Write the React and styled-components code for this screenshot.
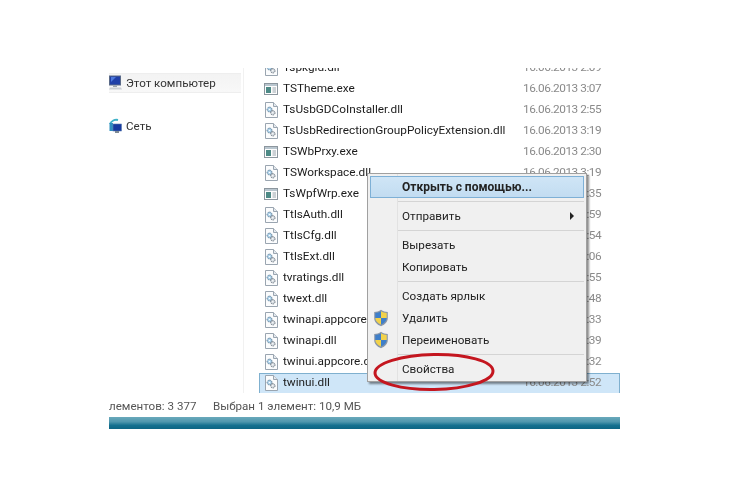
import React from 'react';
import styled, { createGlobalStyle } from 'styled-components';

const GlobalStyle = createGlobalStyle`
  html, body {
    margin: 0;
    padding: 0;
    background: #fff;
  }
  body {
    font-family: Roboto, "Open Sans", "Liberation Sans", sans-serif;
  }
`;

const Page = styled.div`
  width: 730px;
  height: 500px;
  overflow: hidden;
  padding: 68px 110px 0 109px;
  box-sizing: border-box;
`;

const Explorer = styled.div`
  position: relative;
  width: 511px;
  filter: blur(0.3px);
`;

const Main = styled.div`
  display: flex;
  height: 325px;
`;

const Sidebar = styled.div`
  width: 135px;
  flex-shrink: 0;
  padding-top: 5px;
  box-sizing: border-box;
  border-right: 1px solid #f1f1f1;
`;

const NavRow = styled.div`
  display: flex;
  align-items: center;
  gap: 4px;
  width: 132px;
  height: 20px;
  margin-bottom: ${({ $gap }) => $gap || 0}px;
  font-size: 11.6px;
  color: #333;
  background: ${({ $active }) => ($active ? 'linear-gradient(#f3f3f3, #f8f8f8)' : 'transparent')};
  border-top: 1px solid ${({ $active }) => ($active ? '#eee' : 'transparent')};
  border-bottom: 1px solid ${({ $active }) => ($active ? '#eee' : 'transparent')};
  box-sizing: border-box;
`;

const FileList = styled.div`
  flex: 1;
  min-width: 0;
  overflow: hidden;
  padding-left: 15px;
`;

const FileRows = styled.div`
  margin-top: -10.5px;
`;

const FileRow = styled.div`
  display: flex;
  align-items: center;
  height: 21px;
  box-sizing: border-box;
  padding-left: 5px;
  color: #1c1c1c;
  font-size: 11.8px;
  ${({ $selected }) => $selected && `
    background: #cfe6f8;
    border: 1px solid #7fb0cf;
    padding-left: 4px;
  `}
`;

const FileName = styled.span`
  width: 240px;
  flex-shrink: 0;
  margin-left: 5px;
  padding-bottom: 2px;
  white-space: nowrap;
`;

const FileDate = styled.span`
  color: #8a8a8a;
  padding-bottom: 2px;
  letter-spacing: -0.45px;
  white-space: nowrap;
`;

const StatusBar = styled.div`
  display: flex;
  align-items: center;
  height: 24px;
  padding-top: 1px;
  box-sizing: border-box;
  overflow: hidden;
  font-size: 11.6px;
  color: #555;
`;

const StatusCount = styled.span`
  width: 104px;
  flex-shrink: 0;
  white-space: nowrap;
`;

const TaskStrip = styled.div`
  height: 12px;
  background: linear-gradient(#6aa9bb 0%, #4f97ae 40%, #14708f 70%, #0d6584 100%);
`;

const ContextMenu = styled.div`
  position: absolute;
  left: 258px;
  top: 105px;
  width: 220px;
  height: 209px;
  box-sizing: border-box;
  padding: 2px;
  background: linear-gradient(90deg, #f0f0f0 29px, #e2e2e2 29px, #e2e2e2 30px, #f0f0f0 30px);
  border: 1px solid #a0a0a0;
  box-shadow: 2px 2px 2px rgba(0, 0, 0, 0.45);
  color: #222;
  font-size: 11.7px;
`;

const MenuItem = styled.div`
  position: relative;
  display: flex;
  align-items: center;
  height: 22px;
  padding-left: 32px;
  box-sizing: border-box;
  font-weight: ${({ $bold }) => ($bold ? 700 : 400)};
  font-size: ${({ $bold }) => ($bold ? '12px' : 'inherit')};
  ${({ $hot }) => $hot && `
    background: linear-gradient(#cfe5f6, #c2dcf1);
    border: 1px solid #7eb0d6;
    padding-left: 31px;
  `}
`;

const MenuSeparator = styled.div`
  height: 1px;
  margin: 3px 0 3px 28px;
  background: #d4d4d4;
`;

const MenuGutterIcon = styled.span`
  position: absolute;
  left: 3px;
  top: 2px;
  display: flex;
`;

const SubmenuArrow = styled.span`
  position: absolute;
  right: 10px;
  top: 7px;
  border-left: 4px solid #222;
  border-top: 4px solid transparent;
  border-bottom: 4px solid transparent;
`;

const RedCircle = styled.svg`
  position: absolute;
  left: 262px;
  top: 283px;
  width: 126px;
  height: 42px;
  pointer-events: none;
`;

const DllIcon = () => (
  <svg width="14" height="16" viewBox="0 0 14 16" style={{ flexShrink: 0 }}>
    <path d="M1.500 .5h8l4 4v11h-12z" fill="#fbfcfd" stroke="#9aa5b0" />
    <path d="M9.500 .5v4h4" fill="#e4e9ee" stroke="#9aa5b0" />
    <circle cx="5.500" cy="7.500" r="2.400" fill="#a9cfe8" stroke="#5f7f98" strokeDasharray="1.300 .7" />
    <circle cx="8.800" cy="10.800" r="2.200" fill="#d0d7dd" stroke="#6c7680" strokeDasharray="1.300 .7" />
    <circle cx="5.500" cy="7.500" r=".8" fill="#fff" />
    <circle cx="8.800" cy="10.800" r=".7" fill="#fff" />
  </svg>
);

const ExeIcon = () => (
  <svg width="14" height="16" viewBox="0 0 14 14" style={{ flexShrink: 0 }}>
    <rect x=".5" y="1.500" width="13" height="11" fill="#fdfdfd" stroke="#8c969e" />
    <rect x="1" y="2" width="12" height="2" fill="#b9c6cf" />
    <rect x="2" y="5" width="5" height="6" fill="#4d8a86" />
    <path d="M8.500 6h3.500M8.500 8h3.500M8.500 10h3.500" stroke="#9aa5ad" />
  </svg>
);

const ComputerIcon = () => (
  <svg width="13" height="16" viewBox="0 0 13 16" style={{ flexShrink: 0 }}>
    <rect x=".5" y="1" width="11" height="9" fill="#1f3fa8" stroke="#5a6a88" />
    <path d="M2 2h5l-5 5z" fill="#4d79dd" />
    <path d="M4 10.500h4v1.500h-4z" fill="#99a2ad" />
    <path d="M1 12.500h11l1 2h-13z" fill="#c9ced4" />
  </svg>
);

const NetworkIcon = () => (
  <svg width="13" height="16" viewBox="0 0 13 16" style={{ flexShrink: 0 }}>
    <path d="M1 6a7 7 0 0 1 8-4" fill="none" stroke="#3fb2c8" strokeWidth="2" />
    <rect x=".5" y="5" width="3.500" height="8" fill="#2f8fc0" />
    <rect x="4" y="6" width="8.500" height="7" fill="#16399f" stroke="#5c7db0" strokeWidth=".6" />
    <path d="M6 13h4v2h-4z" fill="#7f8a95" />
  </svg>
);

const ShieldIcon = () => (
  <svg width="16" height="18" viewBox="0 0 16 18">
    <path d="M8 .8c2 1.600 4.300 2.200 6.800 2.200v6c0 4-3 6.800-6.800 8.200C4.200 15.800 1.200 13 1.200 9V3C3.700 3 6 2.400 8 .8z" fill="#8a97a8" />
    <path d="M8 2.200v6.800H2.300V3.900C4.200 3.800 6.300 3.300 8 2.200z" fill="#3f7fc9" />
    <path d="M8 2.200c1.700 1.100 3.800 1.600 5.700 1.700V9H8z" fill="#f2d24a" />
    <path d="M8 9h5.700c-.2 3.100-2.600 5.300-5.700 6.500z" fill="#3f7fc9" />
    <path d="M8 9v6.500C4.900 14.300 2.500 12.100 2.300 9z" fill="#f2d24a" />
  </svg>
);

const files = [
  ['Tspkgid.dll', '16.06.2013 2:09', 'dll'],
  ['TSTheme.exe', '16.06.2013 3:07', 'exe'],
  ['TsUsbGDCoInstaller.dll', '16.06.2013 2:55', 'dll'],
  ['TsUsbRedirectionGroupPolicyExtension.dll', '16.06.2013 3:19', 'dll'],
  ['TSWbPrxy.exe', '16.06.2013 2:30', 'exe'],
  ['TSWorkspace.dll', '16.06.2013 3:19', 'dll'],
  ['TsWpfWrp.exe', '16.06.2013 2:35', 'exe'],
  ['TtlsAuth.dll', '16.06.2013 2:59', 'dll'],
  ['TtlsCfg.dll', '16.06.2013 2:54', 'dll'],
  ['TtlsExt.dll', '16.06.2013 3:06', 'dll'],
  ['tvratings.dll', '16.06.2013 2:55', 'dll'],
  ['twext.dll', '16.06.2013 2:48', 'dll'],
  ['twinapi.appcore.dll', '16.06.2013 2:33', 'dll'],
  ['twinapi.dll', '16.06.2013 2:39', 'dll'],
  ['twinui.appcore.dll', '16.06.2013 2:32', 'dll'],
  ['twinui.dll', '16.06.2013 2:52', 'dll'],
];

const App = () => (
  <Page>
    <GlobalStyle />
    <Explorer>
      <Main>
        <Sidebar>
          <NavRow $active $gap={23}>
            <ComputerIcon />
            Этот компьютер
          </NavRow>
          <NavRow>
            <NetworkIcon />
            Сеть
          </NavRow>
        </Sidebar>
        <FileList>
          <FileRows>
            {files.map(([name, date, type]) => (
              <FileRow key={name} $selected={name === 'twinui.dll'}>
                {type === 'exe' ? <ExeIcon /> : <DllIcon />}
                <FileName>{name}</FileName>
                <FileDate>{date}</FileDate>
              </FileRow>
            ))}
          </FileRows>
        </FileList>
      </Main>
      <StatusBar>
        <StatusCount>лементов: 3 377</StatusCount>
        Выбран 1 элемент: 10,9 МБ
      </StatusBar>
      <TaskStrip />
      <ContextMenu>
        <MenuItem $hot $bold>Открыть с помощью...</MenuItem>
        <MenuSeparator />
        <MenuItem>
          Отправить
          <SubmenuArrow />
        </MenuItem>
        <MenuSeparator />
        <MenuItem>Вырезать</MenuItem>
        <MenuItem>Копировать</MenuItem>
        <MenuSeparator />
        <MenuItem>Создать ярлык</MenuItem>
        <MenuItem>
          <MenuGutterIcon><ShieldIcon /></MenuGutterIcon>
          Удалить
        </MenuItem>
        <MenuItem>
          <MenuGutterIcon><ShieldIcon /></MenuGutterIcon>
          Переименовать
        </MenuItem>
        <MenuSeparator />
        <MenuItem>Свойства</MenuItem>
      </ContextMenu>
      <RedCircle viewBox="0 0 126 42">
        <ellipse cx="63" cy="21" rx="59" ry="17.5" fill="none" stroke="#c4161f" strokeWidth="3" transform="rotate(-1 63 21)" />
      </RedCircle>
    </Explorer>
  </Page>
);

export default App;
